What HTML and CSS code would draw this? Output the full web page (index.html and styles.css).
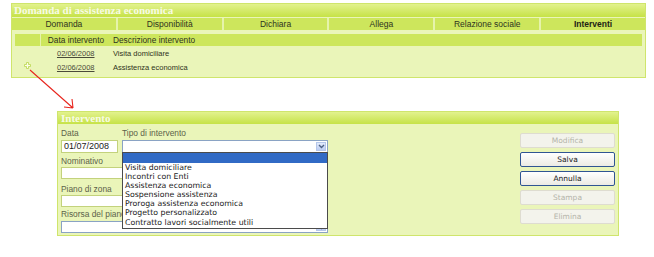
FILE: index.html
```html
<!DOCTYPE html>
<html>
<head>
<meta charset="utf-8">
<link rel="stylesheet" href="styles.css">
</head>
<body>
<div class="panel top">
  <div class="ptitle">Domanda di assistenza economica</div>
  <div class="tabs">
    <div class="tab">Domanda</div>
    <div class="tab">Disponibilità</div>
    <div class="tab">Dichiara</div>
    <div class="tab">Allega</div>
    <div class="tab">Relazione sociale</div>
    <div class="tab active">Interventi</div>
  </div>
  <div class="pbody">
    <table class="grid">
      <tr class="head"><th class="c0"></th><th class="c1">Data intervento</th><th class="c2">Descrizione intervento</th></tr>
      <tr><td class="c0"></td><td class="c1"><a class="dlink">02/06/2008</a></td><td class="c2">Visita domiciliare</td></tr>
      <tr><td class="c0"><svg class="plus" width="7" height="7" viewBox="0 0 7 7"><path d="M2.5 0.5h2v2h2v2h-2v2h-2v-2h-2v-2h2z" fill="#fbfde8" stroke="#b9d64a" stroke-width="0.8"/></svg></td><td class="c1"><a class="dlink">02/06/2008</a></td><td class="c2">Assistenza economica</td></tr>
    </table>
  </div>
</div>

<svg class="arrow" width="80" height="112" viewBox="0 0 80 112">
  <path d="M30 70 L73 108 M73 108 L64 107 M73 108 L72 99" stroke="#e8261e" stroke-width="1.1" fill="none"/>
</svg>

<div class="panel dialog">
  <div class="ptitle dtitle">Intervento</div>
  <div class="dbody">
    <div class="form">
      <div class="row1">
        <div class="col-data">
          <div class="lbl">Data</div>
          <div class="inp">01/07/2008</div>
        </div>
        <div class="col-tipo">
          <div class="lbl">Tipo di intervento</div>
          <div class="sel">
            <span class="arr"><svg width="7" height="5" viewBox="0 0 7 5"><path d="M1 1l2.5 2.5L6 1" stroke="#4d6185" stroke-width="1.4" fill="none"/></svg></span>
            <div class="list">
              <div class="opt hl"></div>
              <div class="opt">Visita domiciliare</div>
              <div class="opt">Incontri con Enti</div>
              <div class="opt">Assistenza economica</div>
              <div class="opt">Sospensione assistenza</div>
              <div class="opt">Proroga assistenza economica</div>
              <div class="opt">Progetto personalizzato</div>
              <div class="opt">Contratto lavori socialmente utili</div>
            </div>
          </div>
        </div>
      </div>
      <div class="lbl l-nom">Nominativo</div>
      <div class="inp wide"></div>
      <div class="lbl l-piano">Piano di zona</div>
      <div class="inp wide"></div>
      <div class="lbl l-ris">Risorsa del piano</div>
      <div class="sel wide"><span class="arr"><svg width="7" height="5" viewBox="0 0 7 5"><path d="M1 1l2.5 2.5L6 1" stroke="#4d6185" stroke-width="1.4" fill="none"/></svg></span></div>
    </div>
    <div class="btns">
      <div class="btn off">Modifica</div>
      <div class="btn on">Salva</div>
      <div class="btn on">Annulla</div>
      <div class="btn off">Stampa</div>
      <div class="btn off">Elimina</div>
    </div>
  </div>
</div>
</body>
</html>
```

FILE: styles.css
```css
html, body {
  margin: 0;
  padding: 0;
  background: #ffffff;
}
body {
  position: relative;
  width: 654px;
  height: 257px;
  overflow: hidden;
  font-family: "Liberation Sans", Arial, sans-serif;
}
.panel {
  box-sizing: border-box;
  background: #eaf5b9;
  border: 1px solid #cfe56c;
}
.top {
  margin: 3px 0 0 11px;
  width: 635px;
  height: 75px;
}
.ptitle {
  height: 13px;
  line-height: 13px;
  padding-left: 2px;
  font-family: "Liberation Serif", "Times New Roman", serif;
  font-weight: bold;
  font-size: 11px;
  color: #f7fbe4;
  background: linear-gradient(#e2f28e, #c6e247);
}
.tabs {
  display: flex;
  margin-top: 1px;
  height: 12px;
}
.tab {
  flex: 1;
  background: #cde65c;
  border-left: 2px solid #e6f3ab;
  text-align: center;
  font-size: 8.5px;
  line-height: 12px;
  color: #2e3320;
}
.tab:first-child { border-left: none; }
.tab.active { font-weight: bold; color: #1e2214; }
.pbody {
  padding: 4px 3px 0 3px;
}
.grid {
  width: 100%;
  border-collapse: collapse;
  font-size: 7.5px;
  color: #2e3320;
}
.grid th {
  height: 12px;
  padding: 0;
  background: #cde65c;
  font-weight: normal;
  font-size: 8.3px;
  color: #2e3320;
}
.grid td {
  height: 14px;
  padding: 0;
}
.grid .c0 {
  width: 25px;
  border-right: 1px solid #e6f3ab;
  text-align: center;
  vertical-align: middle;
}
.grid td.c0 { border-right: none; }
.grid .c1 {
  width: 70px;
  text-align: center;
}
.grid .c2 {
  text-align: left;
  padding-left: 2px;
}
.dlink {
  color: #4a4a3a;
  text-decoration: underline;
}
.plus {
  display: block;
  margin: -3px 0 0 9px;
}
.arrow {
  position: absolute;
  left: 0;
  top: 0;
}
.dialog {
  margin: 33px 0 0 57px;
  width: 562px;
  height: 125px;
}
.dtitle {
  height: 12px;
  line-height: 12px;
  padding-left: 3px;
}
.dbody {
  display: flex;
  justify-content: space-between;
  padding: 4px 3px 0 3px;
}
.form {
  width: 267px;
}
.row1 {
  display: flex;
  gap: 4px;
}
.col-data { width: 57px; }
.col-tipo { width: 206px; }
.lbl {
  height: 10px;
  line-height: 10px;
  font-size: 8.4px;
  color: #5c624a;
  margin-bottom: 2px;
  white-space: nowrap;
}
.inp {
  box-sizing: border-box;
  height: 13px;
  background: #ffffff;
  border: 1px solid #c3d27c;
  font-size: 9px;
  line-height: 11px;
  padding-left: 2px;
  color: #1c1c1c;
}
.inp.wide { height: 12px; width: 267px; }
.sel {
  position: relative;
  box-sizing: border-box;
  height: 13px;
  background: #ffffff;
  border: 1px solid #8aa3c4;
}
.sel.wide { width: 267px; height: 12px; }
.arr {
  position: absolute;
  right: 1px;
  top: 1px;
  width: 10px;
  height: 9px;
  box-sizing: border-box;
  border: 1px solid #b6c7ea;
  background: linear-gradient(#e3ebfc, #bccdf2);
  display: flex;
  align-items: center;
  justify-content: center;
}
.sel.wide .arr { height: 8px; }
.list {
  position: absolute;
  left: -1px;
  top: 11px;
  width: 206px;
  box-sizing: border-box;
  background: #ffffff;
  border: 1px solid #4b4b4b;
  z-index: 5;
  padding-bottom: 1px;
}
.opt {
  height: 9.1px;
  line-height: 9.1px;
  padding-left: 2px;
  font-family: "DejaVu Sans", Verdana, sans-serif;
  font-size: 7.8px;
  color: #1a1a1a;
  white-space: nowrap;
}
.opt.hl {
  height: 10px;
  background: #316ac5;
}
.l-nom { margin-top: 3px; margin-bottom: 1px; }
.l-piano { margin-top: 5px; margin-bottom: 1px; }
.l-ris { margin-top: 2px; margin-bottom: 2px; }
.btns {
  display: flex;
  flex-direction: column;
  gap: 4px;
  margin-top: 5px;
  width: 95px;
}
.btn {
  box-sizing: border-box;
  height: 15px;
  line-height: 13px;
  text-align: center;
  font-family: "DejaVu Sans", Verdana, sans-serif;
  font-size: 7.5px;
  border-radius: 2px;
}
.btn.off {
  background: #f3f3ec;
  border: 1px solid #dedcd0;
  color: #b3b3aa;
}
.btn.on {
  background: linear-gradient(#ffffff, #ecebe4);
  border: 1px solid #2f5593;
  color: #1a1a1a;
}
```
